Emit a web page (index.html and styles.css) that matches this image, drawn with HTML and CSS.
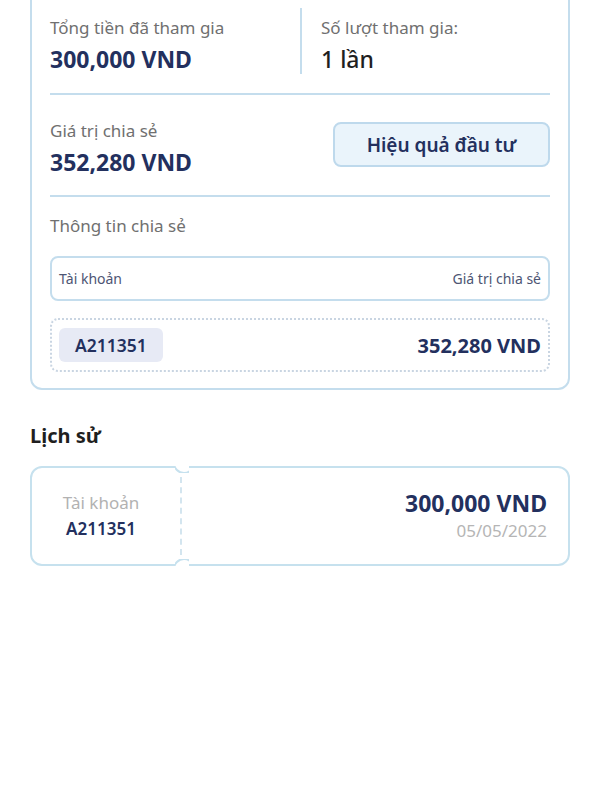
FILE: index.html
```html
<!DOCTYPE html>
<html lang="vi">

<head>
    <meta charset="UTF-8">
    <meta name="viewport" content="width=device-width, initial-scale=1.0">
    <title>Chi tiết đầu tư</title>
    <link rel="stylesheet" href="styles.css">
</head>

<body>
    <div class="page">

        <!-- Summary card -->
        <section class="card">
            <div class="stats">
                <div class="stat">
                    <div class="label">Tổng tiền đã tham gia</div>
                    <div class="value">300,000 VND</div>
                </div>
                <div class="stat stat-right">
                    <div class="label">Số lượt tham gia:</div>
                    <div class="value value-plain">1 lần</div>
                </div>
            </div>

            <div class="share">
                <div>
                    <div class="label">Giá trị chia sẻ</div>
                    <div class="value">352,280 VND</div>
                </div>
                <button class="effect-button">Hiệu quả đầu tư</button>
            </div>

            <div class="share-info">
                <div class="label">Thông tin chia sẻ</div>
                <div class="table-head">
                    <span>Tài khoản</span>
                    <span>Giá trị chia sẻ</span>
                </div>
                <div class="table-row">
                    <span class="chip">A211351</span>
                    <span class="row-value">352,280 VND</span>
                </div>
            </div>
        </section>

        <h2 class="history-title">Lịch sử</h2>

        <div class="ticket">
            <div class="ticket-left">
                <div class="ticket-label">Tài khoản</div>
                <div class="ticket-account">A211351</div>
            </div>
            <div class="ticket-right">
                <div class="ticket-amount">300,000 VND</div>
                <div class="ticket-date">05/05/2022</div>
            </div>
            <span class="notch notch-top"></span>
            <span class="notch notch-bottom"></span>
        </div>

    </div>
</body>

</html>
```

FILE: styles.css
```css
/* General Reset */
* {
    box-sizing: border-box;
}

body {
    margin: 0;
    background: #ffffff;
    font-family: "Noto Sans", "Open Sans", sans-serif;
    color: #23305e;
}

.page {
    padding: 0 30px;
}

/* Summary card */
.card {
    margin-top: -12px;
    border: 2px solid #c4dded;
    border-radius: 12px;
    padding: 18px 18px 16px;
}

.label {
    font-size: 17px;
    line-height: 24px;
    color: #707070;
}

.value {
    margin-top: 4px;
    font-size: 23px;
    line-height: 30px;
    font-weight: 700;
    color: #23305e;
}

.value-plain {
    font-weight: 500;
    color: #1f1f1f;
}

.stats {
    display: grid;
    grid-template-columns: 1fr 1fr;
    padding-bottom: 19px;
    border-bottom: 2px solid #c4dded;
}

.stat {
    padding-top: 8px;
}

.stat-right {
    border-left: 2px solid #c4dded;
    padding-left: 19px;
}

.share {
    display: flex;
    justify-content: space-between;
    align-items: flex-start;
    padding: 24px 0 18px;
    border-bottom: 2px solid #c4dded;
}

.effect-button {
    margin-top: 3px;
    width: 217px;
    height: 45px;
    border: 2px solid #bed9ec;
    border-radius: 8px;
    background: #eaf4fb;
    font-family: inherit;
    font-size: 19px;
    font-weight: 600;
    color: #23305e;
    cursor: pointer;
}

.share-info {
    padding-top: 17px;
}

.table-head {
    display: flex;
    justify-content: space-between;
    align-items: center;
    margin-top: 18px;
    height: 45px;
    padding: 0 7px;
    border: 2px solid #c4dded;
    border-radius: 8px;
    font-size: 14px;
    color: #4d5573;
}

.table-row {
    display: flex;
    justify-content: space-between;
    align-items: center;
    margin-top: 17px;
    height: 54px;
    padding: 0 7px;
    border: 2px dotted #c9d5e2;
    border-radius: 8px;
}

.chip {
    padding: 0 16px;
    height: 34px;
    line-height: 34px;
    border-radius: 6px;
    background: #e7eaf5;
    font-size: 17.5px;
    font-weight: 600;
}

.row-value {
    font-size: 20px;
    font-weight: 700;
}

/* History */
.history-title {
    margin: 33px 0 17px;
    font-size: 20px;
    line-height: 26px;
    font-weight: 700;
    color: #1f1f1f;
}

.ticket {
    position: relative;
    display: flex;
    height: 100px;
    border: 2px solid #c6e1ee;
    border-radius: 12px;
}

.ticket-left {
    width: 150px;
    display: flex;
    flex-direction: column;
    justify-content: center;
    align-items: center;
    padding-right: 10px;
    border-right: 2px dashed #d3e5ef;
    margin: 9px 0;
}

.ticket-label {
    font-size: 17px;
    line-height: 26px;
    color: #b2b2b2;
}

.ticket-account {
    font-size: 17px;
    line-height: 26px;
    font-weight: 600;
}

.ticket-right {
    flex: 1;
    display: flex;
    flex-direction: column;
    justify-content: center;
    align-items: flex-end;
    padding-right: 21px;
}

.ticket-amount {
    font-size: 23px;
    line-height: 30px;
    font-weight: 700;
}

.ticket-date {
    font-size: 17px;
    line-height: 26px;
    color: #b5b5b5;
}

/* small notches on the ticket edge */
.notch {
    position: absolute;
    left: 143px;
    width: 14px;
    height: 7px;
    background: #ffffff;
    overflow: hidden;
}

.notch::after {
    content: "";
    position: absolute;
    left: -2px;
    width: 18px;
    height: 18px;
    border: 2px solid #c6e1ee;
    border-radius: 50%;
}

.notch-top {
    top: -2px;
}

.notch-top::after {
    top: -14px;
}

.notch-bottom {
    bottom: -2px;
}

.notch-bottom::after {
    bottom: -14px;
}
```
